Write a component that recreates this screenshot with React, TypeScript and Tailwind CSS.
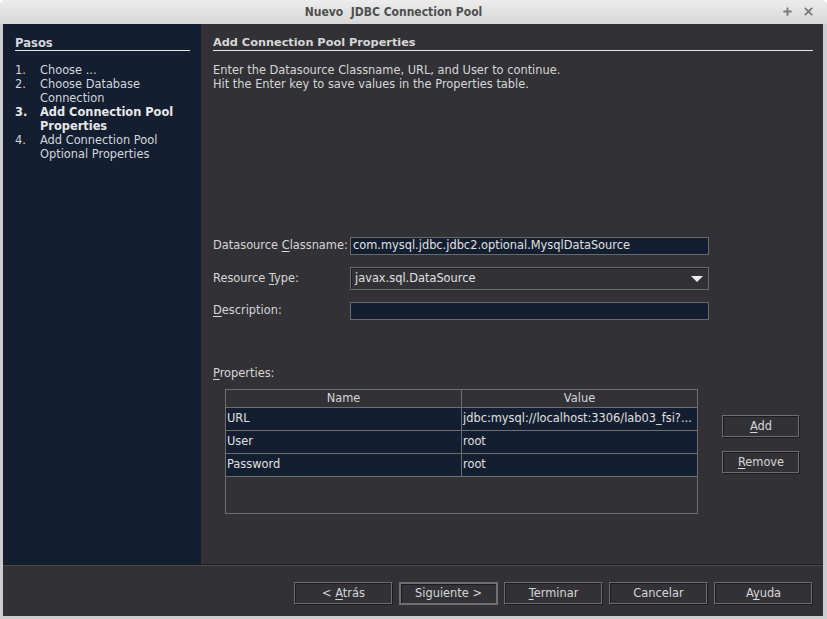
import React from "react";

const U = ({ c }: { c: string }) => <span className="underline underline-offset-2">{c}</span>;

function Btn({ children, focused, w = "w-[99px]" }: { children: React.ReactNode; focused?: boolean; w?: string }) {
  return (
    <div
      className={`${w} h-[23px] flex items-center justify-center text-[11.4px] text-[#d6d6d6] bg-[#323236] ${
        focused
          ? "border-2 border-[#6f6f6f] shadow-[inset_1px_1px_0_#1b1b1e]"
          : "border border-t-[#6e6e6e] border-l-[#6e6e6e] border-r-[#1c1c1f] border-b-[#1c1c1f] shadow-[inset_-1px_-1px_0_#6e6e6e,inset_1px_1px_0_#1c1c1f]"
      }`}
    >
      {children}
    </div>
  );
}

export default function App() {
  const font = { fontFamily: '"DejaVu Sans", "Liberation Sans", sans-serif' };
  return (
    <div className="w-[827px] h-[619px] bg-[#cdcdcd] rounded-t-[6px] flex flex-col overflow-hidden" style={font}>
      {/* title bar */}
      <div className="h-[24px] bg-gradient-to-b from-[#ececec] to-[#d8d8d8] flex items-center relative shrink-0 rounded-t-[6px]">
        <div
          className="flex-1 text-center text-[12px] font-bold text-[#4f4f4f] whitespace-pre pr-[40px]"
          style={{ fontFamily: '"DejaVu Sans Condensed", "Liberation Sans Narrow", sans-serif' }}
        >
          Nuevo  JDBC Connection Pool
        </div>
        <div className="absolute right-[13px] top-[6px] flex items-center gap-[10px]">
          <svg width="11" height="11" viewBox="0 0 12 12">
            <path d="M6 1.5v9M1.5 6h9" stroke="#7a7a7a" strokeWidth="2" />
          </svg>
          <svg width="11" height="11" viewBox="0 0 12 12">
            <path d="M2 2l8 8M10 2l-8 8" stroke="#7a7a7a" strokeWidth="2" />
          </svg>
        </div>
      </div>

      {/* body */}
      <div className="flex-1 flex flex-col ml-[3px] mr-[4px] mb-[3px] bg-[#323236]">
        <div className="flex h-[540px]">
          {/* sidebar */}
          <div className="w-[198px] bg-[#131e31] text-[#d4d7dc] pt-[12px] pl-[12px] pr-[11px] text-[11.4px]">
            <div className="font-bold text-[11.6px] leading-[14px] border-b border-[#e6e6e6] h-[15px]">Pasos</div>
            <div className="mt-[12px] leading-[14px]">
              <div className="flex"><span className="w-[25px]">1.</span><span>Choose ...</span></div>
              <div className="flex"><span className="w-[25px] shrink-0">2.</span><span>Choose Database<br />Connection</span></div>
              <div className="flex font-bold text-[#e8e8e8]"><span className="w-[25px] shrink-0">3.</span><span>Add Connection Pool<br />Properties</span></div>
              <div className="flex"><span className="w-[25px] shrink-0">4.</span><span>Add Connection Pool<br />Optional Properties</span></div>
            </div>
          </div>

          {/* content */}
          <div className="flex-1 pt-[12px] pl-[12px] pr-[10px] text-[11.4px] text-[#d6d6d6]">
            <div className="font-bold text-[11.3px] leading-[14px] border-b border-[#e6e6e6] h-[15px]">Add Connection Pool Properties</div>
            <div className="mt-[12px] leading-[14px]">
              <div>Enter the Datasource Classname, URL, and User to continue.</div>
              <div>Hit the Enter key to save values in the Properties table.</div>
            </div>

            <div className="mt-[146px] flex items-center h-[18px]">
              <div className="w-[137px] whitespace-nowrap">Datasource <U c="C" />lassname:</div>
              <div className="w-[359px] h-[18px] bg-[#131e31] border border-[#6a6a6a] flex items-center pl-[2px] text-[#e0e0e0]">
                com.mysql.jdbc.jdbc2.optional.MysqlDataSource
              </div>
            </div>

            <div className="mt-[12px] flex items-center h-[23px]">
              <div className="w-[137px]">Resource <U c="T" />ype:</div>
              <div className="w-[359px] h-[23px] border border-[#6a6a6a] shadow-[inset_1px_1px_0_#1c1c1f] flex items-center pl-[4px] pr-[4px] justify-between text-[#e0e0e0]">
                <span>javax.sql.DataSource</span>
                <svg width="12" height="8" viewBox="0 0 12 8" className="mr-[1px]">
                  <path d="M0 1h12L6 7z" fill="#ececec" />
                </svg>
              </div>
            </div>

            <div className="mt-[12px] flex items-center h-[18px]">
              <div className="w-[137px]"><U c="D" />escription:</div>
              <div className="w-[359px] h-[18px] bg-[#131e31] border border-[#6a6a6a]" />
            </div>

            <div className="mt-[46px] leading-[14px]"><U c="P" />roperties:</div>

            <div className="mt-[9px] flex">
              <div className="ml-[12px] w-[473px] h-[125px] border border-[#6e6e6e] bg-[#323236]">
                <div className="flex h-[18px] border-b border-[#6e6e6e]">
                  <div className="w-[236px] border-r border-[#6e6e6e] flex items-center justify-center">Name</div>
                  <div className="flex-1 flex items-center justify-center">Value</div>
                </div>
                {[
                  ["URL", "jdbc:mysql://localhost:3306/lab03_fsi?..."],
                  ["User", "root"],
                  ["Password", "root"],
                ].map(([k, v]) => (
                  <div key={k} className="flex h-[23px] border-b border-[#6e6e6e] bg-[#131e31] text-[#e0e0e0]">
                    <div className="w-[236px] border-r border-[#6e6e6e] flex items-center pl-[1px]">{k}</div>
                    <div className="flex-1 flex items-center pl-[1px] overflow-hidden whitespace-nowrap">{v}</div>
                  </div>
                ))}
              </div>
              <div className="ml-[24px] flex flex-col gap-[13px] mt-[26px]">
                <Btn w="w-[78px]"><span><U c="A" />dd</span></Btn>
                <Btn w="w-[78px]"><span><U c="R" />emove</span></Btn>
              </div>
            </div>
          </div>
        </div>

        {/* separator */}
        <div className="h-[1px] bg-[#1e1e21]" />
        <div className="h-[1px] bg-[#48484c]" />

        {/* button bar */}
        <div className="flex-1 flex justify-end items-start pt-[16px] pr-[10px] gap-[6px]">
          <Btn><span>&lt; <U c="A" />trás</span></Btn>
          <Btn focused><span>Siguiente &gt;</span></Btn>
          <Btn><span><U c="T" />erminar</span></Btn>
          <Btn><span>Cancelar</span></Btn>
          <Btn><span>A<U c="y" />uda</span></Btn>
        </div>
      </div>
    </div>
  );
}
